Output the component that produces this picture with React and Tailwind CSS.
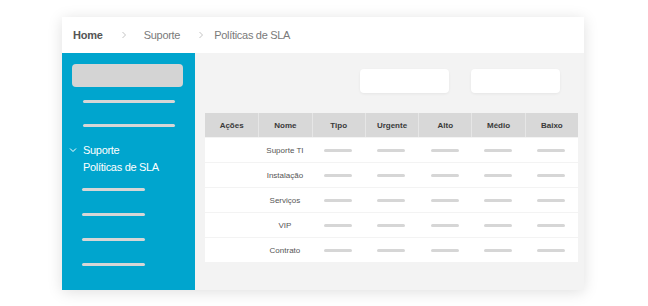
const columns = ['Ações', 'Nome', 'Tipo', 'Urgente', 'Alto', 'Médio', 'Baixo'];
const rows = ['Suporte TI', 'Instalação', 'Serviços', 'VIP', 'Contrato'];

function Chevron() {
  return (
    <svg width="6" height="8" viewBox="0 0 6 8" className="text-[#c4c4c4]">
      <path d="M1.5 1l3 3-3 3" fill="none" stroke="currentColor" strokeWidth="1" />
    </svg>
  );
}

function Bar({ className }) {
  return <div className={`h-[3px] rounded-full bg-[#d6d6d6] ${className}`} />;
}

export default function App() {
  return (
    <div className="min-h-[306px] bg-white pt-[17px] font-['Liberation_Sans',Arial,sans-serif]">
      <div className="ml-[62px] w-[522px] shadow-[0_2px_14px_rgba(0,0,0,0.13)]">
        <header className="flex h-[36px] items-center bg-white pl-[11px] text-[11px]">
          <span className="font-bold tracking-[-0.2px] text-[#555]">Home</span>
          <span className="ml-[18px] mr-[17px] flex"><Chevron /></span>
          <span className="tracking-[-0.3px] text-[#7a7a7a]">Suporte</span>
          <span className="ml-[18px] mr-[10px] flex"><Chevron /></span>
          <span className="tracking-[-0.3px] text-[#7a7a7a]">Políticas de SLA</span>
        </header>

        <div className="flex h-[237px]">
          <aside className="flex w-[133px] flex-col bg-[#00a5ce]">
            <div className="ml-[10px] mt-[11px] h-[23px] w-[111px] rounded-[4px] bg-[#d4d4d4]" />
            <Bar className="ml-[21px] mt-[13px] w-[92px]" />
            <Bar className="ml-[21px] mt-[21px] w-[92px]" />
            <div className="mt-[14px] flex items-center pl-[7px] text-[11px] leading-[18px] text-white">
              <svg width="8" height="6" viewBox="0 0 8 6" className="mr-[6px]">
                <path d="M1 1.5l3 3 3-3" fill="none" stroke="white" strokeWidth="1" />
              </svg>
              <span className="tracking-[-0.3px]">Suporte</span>
            </div>
            <div className="pl-[21px] text-[11px] leading-[17px] tracking-[-0.3px] text-white">Políticas de SLA</div>
            <Bar className="ml-[20px] mt-[12px] w-[63px]" />
            <Bar className="ml-[20px] mt-[22px] w-[63px]" />
            <Bar className="ml-[20px] mt-[22px] w-[63px]" />
            <Bar className="ml-[20px] mt-[22px] w-[63px]" />
          </aside>

          <main className="flex-1 bg-[#f3f3f3] pl-[10px]">
            <div className="mt-[16px] flex justify-end gap-[22px] pr-[24px]">
              <div className="h-[24px] w-[89px] rounded-[4px] bg-white shadow-[0_1px_3px_rgba(0,0,0,0.06)]" />
              <div className="h-[24px] w-[89px] rounded-[4px] bg-white shadow-[0_1px_3px_rgba(0,0,0,0.06)]" />
            </div>

            <div className="mt-[20px] w-[373px]">
              <div className="grid h-[24px] grid-cols-7 bg-[#d8d8d8]">
                {columns.map((col, i) => (
                  <div
                    key={col}
                    className={`flex items-center justify-center pt-px text-[8px] font-bold text-[#3a3a3a] ${i > 0 ? 'border-l border-[#e6e6e6]' : ''}`}
                  >
                    {col}
                  </div>
                ))}
              </div>
              {rows.map((name) => (
                <div key={name} className="mt-px grid h-[24px] grid-cols-7 bg-white">
                  <div />
                  <div className="flex items-center justify-center pt-[2px] text-[8px] text-[#555]">{name}</div>
                  {[0, 1, 2, 3, 4].map((k) => (
                    <div key={k} className="flex items-center justify-center">
                      <Bar className="w-[28px]" />
                    </div>
                  ))}
                </div>
              ))}
            </div>
          </main>
        </div>
      </div>
    </div>
  );
}
